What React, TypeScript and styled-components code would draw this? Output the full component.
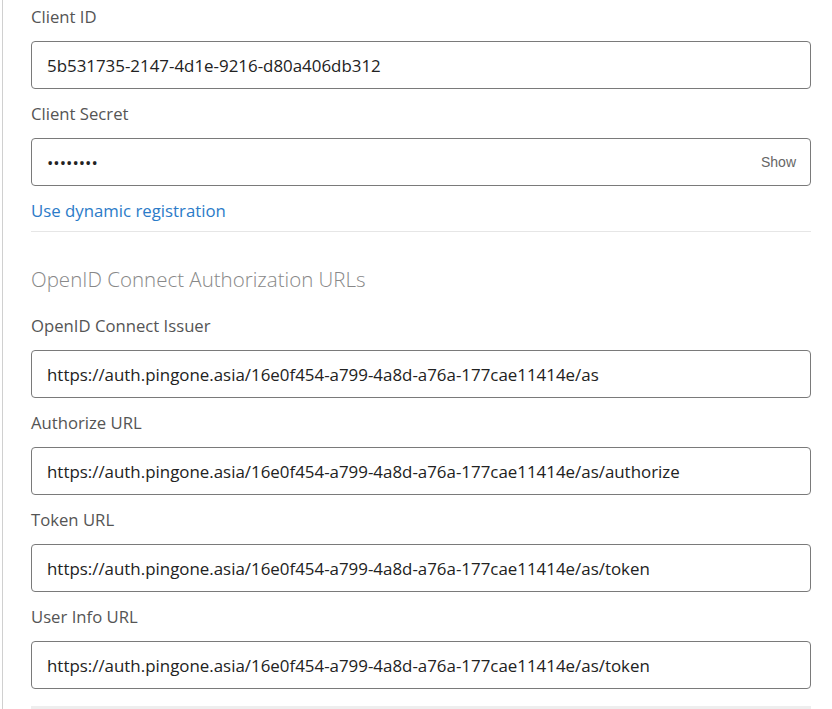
import React from "react";
import styled, { createGlobalStyle } from "styled-components";

const GlobalStyle = createGlobalStyle`
  html, body {
    margin: 0;
    padding: 0;
    background: #ffffff;
    font-family: "Open Sans", "Liberation Sans", sans-serif;
    overflow: hidden;
  }
`;

const Panel = styled.div`
  margin-left: 2px;
  border-left: 1px solid #d0d0d0;
  padding: 5px 0 0 28px;
  width: 780px;
  min-height: 760px;
`;

const Field = styled.div`
  display: flex;
  flex-direction: column;
  margin-bottom: 13px;
`;

const Label = styled.label`
  font-size: 16.7px;
  line-height: 24px;
  color: #555555;
  margin-bottom: 12px;
`;

const InputWrap = styled.div`
  position: relative;
`;

const TextInput = styled.input`
  box-sizing: border-box;
  width: 100%;
  height: 48px;
  padding: 0 60px 0 15px;
  border: 1px solid #7a7a7a;
  border-radius: 4px;
  font-family: "Open Sans", "Liberation Sans", sans-serif;
  font-size: 16.9px;
  color: #222222;
  background: #ffffff;
  outline: none;
`;

const ShowToggle = styled.span`
  position: absolute;
  right: 15px;
  top: 50%;
  transform: translateY(-50%);
  font-family: "Liberation Sans", Arial, sans-serif;
  font-size: 14px;
  color: #666666;
  cursor: pointer;
`;

const LinkText = styled.a`
  display: block;
  font-size: 16.8px;
  line-height: 24px;
  color: #2b7bc8;
  text-decoration: none;
  margin-bottom: 8px;
`;

const Divider = styled.hr`
  border: none;
  border-top: 1px solid #e6e6e6;
  margin: 0 0 33px 0;
`;

const SectionTitle = styled.h2`
  margin: 0 0 21px 0;
  font-size: 20.5px;
  line-height: 28px;
  font-weight: 300;
  color: #888888;
`;

const BottomBar = styled.div`
  margin-top: 17px;
  height: 40px;
  background: #eeeeee;
`;

const urlFields = [
  { label: "OpenID Connect Issuer", value: "https://auth.pingone.asia/16e0f454-a799-4a8d-a76a-177cae11414e/as" },
  { label: "Authorize URL", value: "https://auth.pingone.asia/16e0f454-a799-4a8d-a76a-177cae11414e/as/authorize" },
  { label: "Token URL", value: "https://auth.pingone.asia/16e0f454-a799-4a8d-a76a-177cae11414e/as/token" },
  { label: "User Info URL", value: "https://auth.pingone.asia/16e0f454-a799-4a8d-a76a-177cae11414e/as/token" },
];

export default function App() {
  return (
    <>
      <GlobalStyle />
      <Panel>
        <Field>
          <Label>Client ID</Label>
          <TextInput readOnly value="5b531735-2147-4d1e-9216-d80a406db312" />
        </Field>
        <Field>
          <Label>Client Secret</Label>
          <InputWrap>
            <TextInput type="password" readOnly value="abcdefgh" />
            <ShowToggle>Show</ShowToggle>
          </InputWrap>
        </Field>
        <LinkText href="#">Use dynamic registration</LinkText>
        <Divider />
        <SectionTitle>OpenID Connect Authorization URLs</SectionTitle>
        {urlFields.map((f) => (
          <Field key={f.label}>
            <Label>{f.label}</Label>
            <TextInput readOnly value={f.value} />
          </Field>
        ))}
        <BottomBar />
      </Panel>
    </>
  );
}
